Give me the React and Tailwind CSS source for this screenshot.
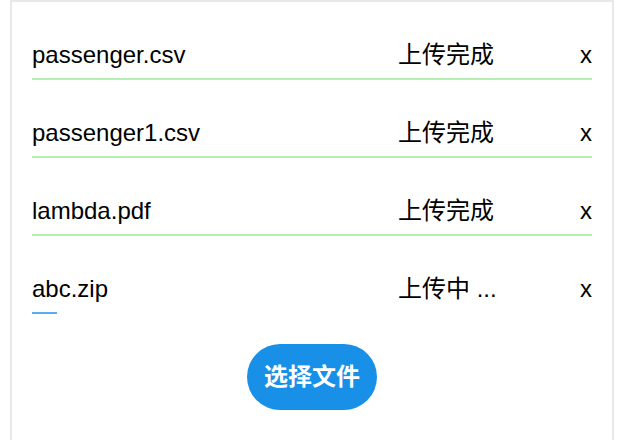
import { useState } from "react";

const initialFiles = [
  { name: "passenger.csv", status: "上传完成", progress: 100 },
  { name: "passenger1.csv", status: "上传完成", progress: 100 },
  { name: "lambda.pdf", status: "上传完成", progress: 100 },
  { name: "abc.zip", status: "上传中 ...", progress: 4.5 },
];

function FileRow({ file, onRemove }) {
  const done = file.progress >= 100;
  return (
    <div className="pt-[35px]">
      <div className="flex items-center leading-[36px] text-[24px] text-black">
        <span className="flex-1">{file.name}</span>
        <span className="w-[182px]">{file.status}</span>
        <button className="leading-[36px] cursor-pointer" onClick={onRemove}>
          x
        </button>
      </div>
      <div className="mt-[5px] h-[2px]">
        <div
          className={done ? "h-full bg-[#b4eeb0]" : "h-full bg-[#5cabec]"}
          style={{ width: file.progress + "%" }}
        />
      </div>
    </div>
  );
}

export default function App() {
  const [files, setFiles] = useState(initialFiles);

  return (
    <div
      className="min-h-[440px] bg-white"
      style={{ fontFamily: '"Liberation Sans", "Noto Sans CJK SC", sans-serif' }}
    >
      <div className="ml-[10px] w-[604px] h-[460px] border-2 border-[#e8e8e8] px-[20px]">
        {files.map((f, i) => (
          <FileRow
            key={f.name}
            file={f}
            onRemove={() => setFiles(files.filter((_, j) => j !== i))}
          />
        ))}
        <div className="flex justify-center mt-[30px]">
          <button className="h-[66px] px-[17px] rounded-full bg-[#1890e8] text-white text-[24px] font-bold">
            选择文件
          </button>
        </div>
      </div>
    </div>
  );
}
